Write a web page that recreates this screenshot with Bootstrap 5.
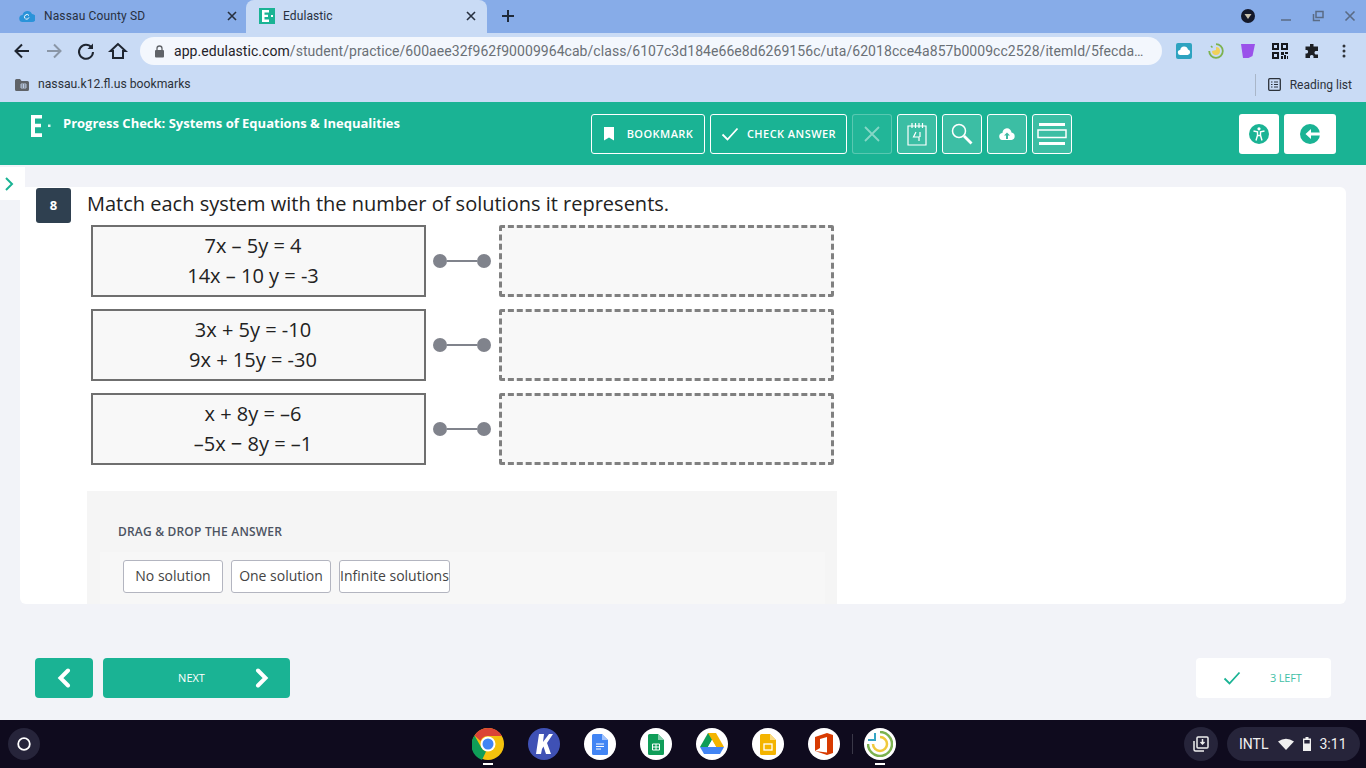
<!doctype html>
<html lang="en"><head><meta charset="utf-8"><title>Edulastic</title>
<link href="https://cdn.jsdelivr.net/npm/bootstrap@5.3.0/dist/css/bootstrap.min.css" rel="stylesheet">
<style>
html,body{height:768px;overflow:hidden}
body{font-family:"Open Sans",sans-serif;background:#f2f3f8;color:#333;width:1366px}
.chrome{font-family:Roboto,sans-serif}
.tabbar{height:33px;background:#87ace8;padding-left:8px;color:#1f2a3a}
.tabx{width:238px;height:33px;padding:0 9px 2px 11px;font-size:12px;font-weight:400;color:#27303f}
.tabx .ttl{flex:1;margin-left:9px;letter-spacing:.13px}
.tabx.on{background:#c9dbf5;width:241px;border-radius:8px 8px 0 0;padding:0 11px 2px 13px;color:#27303f}
.tabx.on .ttl{margin-left:8px;letter-spacing:.1px}
.tabplus{margin-left:14px;margin-bottom:2px}
.winctl{margin-left:auto;gap:18px;padding:0 9px 2px 0}
.winfirst{margin-right:6px}
.toolbar{height:36px;background:#c9dbf5;padding-left:11px}
.navico{width:22px;height:22px;margin-right:10px}
.navico.last{margin-right:11px}
.urlbar{width:1022px;height:28px;background:#f3f7fd;border-radius:14px;font-size:14px;padding-left:14px;color:#6a7076;white-space:nowrap;overflow:hidden}
.urlbar b{font-weight:400;color:#1f2329}
.urltxt{margin-left:9px;letter-spacing:.055px}
.exts{gap:16px;margin-left:14px}
.bmbar{height:33px;background:#c9dbf5;padding:0 14px 2px 15px;font-size:12.2px;color:#2c323a}
.bmlabel{margin-left:9px}
.rlist{margin-left:auto;height:22px;border-left:1px solid #a9b6c8;padding-left:12px;font-size:12px}
.rlabel{margin-left:9px}
.eduhead{height:63px;background:#1ab394;color:#fff;position:relative}
.logoe{width:63px;padding-left:31px;padding-top:10px;height:100%;flex:none}
.etitle{font-size:13px;font-weight:700;padding-top:12px;width:528px;flex:none}
.tools{gap:5px;padding-top:12px}
.hbtn{height:40px;border:1px solid #fff;border-radius:3px;background:transparent;color:#fff;font-size:11px;font-weight:600;letter-spacing:.45px;padding:0;display:flex;align-items:center;justify-content:center}
.hbtn.sq{width:40px;background:rgba(255,255,255,.15)}
.hbtn.off{border-color:rgba(255,255,255,.25);background:rgba(255,255,255,.04)}
.whitebtn{height:40px;background:#fff;border-radius:3px;display:flex;align-items:center;justify-content:center}
.rtools{gap:5px;margin-left:167px;padding-top:12px}
.sidetab{position:absolute;left:0;top:167px;width:25px;height:33px;background:#fff;display:flex;align-items:center;padding-left:4px}
.mainarea{height:555px;padding:22px 20px 0}
.qcard{height:417px;background:#fff;border-radius:6px;overflow:hidden;padding:1px 0 0 16px;width:1326px}
.qnum{width:35px;height:35px;background:#2f4050;color:#fff;border-radius:3px;font-size:13px;font-weight:700;display:flex;align-items:center;justify-content:center;flex:none}
.qtitle{font-size:20px;margin-left:16px;padding-top:1px;line-height:30px;color:#222}
.matchrows{margin-left:55px;margin-top:2px;gap:12px}
.mrow{height:72px}
.lbox{width:335px;height:72px;border:2px solid #6f6f6f;background:#f8f8f8;font-size:20px;line-height:30px;color:#222;text-align:center;padding-right:11px;display:flex;flex-direction:column;justify-content:center}
.connect{width:73px;padding:0 8px 0 7px;flex:none}
.dotc{width:14px;height:14px;background:#80838c;border-radius:50%;flex:none}
.linec{flex:1;height:2px;background:#80838c}
.rbox{width:335px;height:72px;border:3px dashed #808080;background:#f8f8f8;border-radius:2px}
.dragzone{margin:26px 0 0 51px;width:750px;height:113px;background:#f5f5f5;padding:33px 0 0 31px}
.draglabel{font-size:12px;font-weight:600;color:#4c5361;line-height:16px;letter-spacing:.19px}
.chipwrap{margin:12px 0 0 -18px;width:725px;height:60px;background:#f7f7f7;padding:8px 0 0 23px}
.chips{gap:8px}
.chipb{height:33px;background:#fff;border:1px solid #b3b5c0;border-radius:3px;font-size:14px;line-height:29px;color:#444;text-align:center;white-space:nowrap}
.bottomnav{margin-top:54px;padding:0 15px;height:40px;width:1326px}
.tealb{height:40px;background:#1ab394;border-radius:4px;color:#fff;font-size:11px;display:flex;align-items:center;justify-content:center;border:0}
.nextb{width:187px;margin-left:10px;position:relative}
.nextlabel{margin-right:10px}
.nextchev{position:absolute;left:152px;top:10px}
.leftcnt{width:135px;height:40px;background:#fff;border-radius:4px;margin-left:auto;color:#3fbfa6;font-size:11px;padding-left:27px;letter-spacing:-.2px}
.leftlabel{margin-left:29px}
.shelf{position:absolute;left:0;top:720px;width:1366px;height:48px;background:#0f0b1e;font-family:Roboto,sans-serif}
.launch{width:32px;height:32px;border-radius:50%;background:#26243a;left:8px;top:8px;position:absolute;display:flex;align-items:center;justify-content:center}
.apps{position:absolute;left:472px;top:8px;gap:24px}
.appi{width:32px;height:32px;border-radius:50%;background:#fff;position:relative;display:flex;align-items:center;justify-content:center}
.appchrome{background:none}
.appk{background:#3f51b5}
.shelfsep{position:absolute;left:852px;top:14px;width:1px;height:20px;background:#3a3848}
.runmark{position:absolute;left:11px;top:35px;width:10px;height:2px;background:#fff}
.holdbtn{position:absolute;left:1184px;top:7px;width:34px;height:34px;border-radius:50%;background:#26243a;display:flex;align-items:center;justify-content:center}
.tray{position:absolute;left:1227px;top:7px;width:133px;height:34px;border-radius:17px;background:#26243a;color:#f0f0f0;font-size:14px;padding-left:12px;gap:9px}
</style></head><body>

<div class="chrome">
 <div class="tabbar d-flex align-items-center">
  <div class="tabx d-flex align-items-center">
   <svg width="16" height="14" viewBox="0 0 16 14"><path d="M4 13a3.500 3.500 0 0 1-.5-7A5 5 0 0 1 13 5a4 4 0 0 1-.5 8z" fill="#2a93d9"/><path d="M6 9.500a2.500 2.500 0 0 1 4-3M6.500 10c2 .5 3-.5 3.500-1.500" stroke="#fff" fill="none"/></svg>
   <span class="ttl">Nassau County SD</span>
   <svg width="10" height="10" viewBox="0 0 10 10"><path d="M1 1l8 8M9 1l-8 8" stroke="#27303f" stroke-width="1.600"/></svg>
  </div>
  <div class="tabx on d-flex align-items-center">
   <svg width="16" height="16" viewBox="0 0 16 16"><rect width="16" height="16" fill="#1ab394"/><path d="M3 2h7v2.500H5.500v2.200H9v2.300H5.500v2.500H10V14H3z" fill="#fff"/><rect x="12" y="7" width="2" height="2" fill="#fff"/></svg>
   <span class="ttl">Edulastic</span>
   <svg width="10" height="10" viewBox="0 0 10 10"><path d="M1 1l8 8M9 1l-8 8" stroke="#27303f" stroke-width="1.600"/></svg>
  </div>
  <svg class="tabplus" width="14" height="14" viewBox="0 0 14 14"><path d="M7 1v12M1 7h12" stroke="#1f2a3a" stroke-width="2"/></svg>
  <div class="winctl d-flex align-items-center">
   <svg class="winfirst" width="14" height="14" viewBox="0 0 14 14"><circle cx="7" cy="7" r="7" fill="#14192b"/><path d="M3.500 5h7L7 10z" fill="#c9c2ae"/></svg>
   <svg width="14" height="14" viewBox="0 0 14 14"><path d="M2 11h10" stroke="#5a6b85" stroke-width="1.500"/></svg>
   <svg width="14" height="14" viewBox="0 0 14 14"><path d="M5 2.500h7v6H5zM2.500 5v6.500H9" fill="none" stroke="#5a6b85" stroke-width="1.500"/></svg>
   <svg width="14" height="14" viewBox="0 0 14 14"><path d="M2.500 2.500l9 9M11.500 2.500l-9 9" stroke="#5a6b85" stroke-width="1.600"/></svg>
  </div>
 </div>
 <div class="toolbar d-flex align-items-center">
  <svg class="navico" viewBox="0 0 22 22"><path d="M18 11H5M11 4.500L4.500 11l6.500 6.500" fill="none" stroke="#1e2530" stroke-width="2"/></svg>
  <svg class="navico" viewBox="0 0 22 22"><path d="M4 11h13M11 4.500l6.500 6.500-6.500 6.500" fill="none" stroke="#8a96a6" stroke-width="2"/></svg>
  <svg class="navico" viewBox="0 0 22 22"><path d="M16.500 7.500A7 7 0 1 0 18 12" fill="none" stroke="#1e2530" stroke-width="2"/><path d="M18 3.500V9h-5.500z" fill="#1e2530"/></svg>
  <svg class="navico last" viewBox="0 0 22 22"><path d="M11 4L3.500 11H6v7h10v-7h2.500z" fill="none" stroke="#1e2530" stroke-width="2"/></svg>
  <div class="urlbar d-flex align-items-center">
   <svg width="11" height="13" viewBox="0 0 11 13"><rect x="1" y="5" width="9" height="7.500" rx="1" fill="#5f6368"/><path d="M3 5V3.500a2.500 2.500 0 0 1 5 0V5" fill="none" stroke="#5f6368" stroke-width="1.300"/></svg>
   <span class="urltxt"><b>app.edulastic.com</b>/student/practice/600aee32f962f90009964cab/class/6107c3d184e66e8d6269156c/uta/62018cce4a857b0009cc2528/itemId/5fecda…</span>
  </div>
  <div class="exts d-flex align-items-center">
   <svg width="16" height="16" viewBox="0 0 16 16"><rect width="16" height="16" rx="2" fill="#2ea3c0"/><path d="M4.500 12a2.500 2.500 0 0 1-.3-5A4 4 0 0 1 12 6.500a2.800 2.800 0 0 1-.3 5.500z" fill="#fff"/></svg>
   <svg width="16" height="16" viewBox="0 0 16 16"><path d="M8 1.200A6.800 6.800 0 1 1 1.200 8" fill="none" stroke="#7cb24f" stroke-width="1.800"/><path d="M8 4a4 4 0 1 1-4 4l4-1z" fill="#f0d15a"/><path d="M3 3l1.500 1.500" stroke="#7cb24f" stroke-width="1.500"/></svg>
   <svg width="16" height="16" viewBox="0 0 16 16"><path d="M1 1h14l-2.500 12-4 2H3z" fill="#9a52ea"/></svg>
   <svg width="16" height="16" viewBox="0 0 16 16" fill="#15181d"><path d="M0 0h7v7H0zM2 2v3h3V2zM9 0h7v7H9zM11 2v3h3V2zM0 9h7v7H0zM2 11v3h3v-3z" fill-rule="evenodd"/><path d="M9 9h3v3H9zM13 9h3v2h-3zM12 12h2v4h-2zM9 13h2v3H9zM15 13h1v3h-1z"/></svg>
   <svg width="16" height="16" viewBox="0 0 16 16"><path d="M6 1h3.500v2.500H14V8h-2.500a2 2 0 0 0 0 3.500H14V15H9.500v-2a2 2 0 0 0-3.500 0v2H1.500v-4.500h1.600a2 2 0 0 0 0-3.500H1.500V3.500H6z" fill="#1c1f24"/></svg>
   <svg width="16" height="16" viewBox="0 0 16 16" fill="#30343a"><circle cx="8" cy="3" r="1.500"/><circle cx="8" cy="8" r="1.500"/><circle cx="8" cy="13" r="1.500"/></svg>
  </div>
 </div>
 <div class="bmbar d-flex align-items-center">
  <svg width="14" height="12" viewBox="0 0 14 12"><path d="M0 1.500A1.500 1.500 0 0 1 1.500 0h3.500l1.500 2h6A1.500 1.500 0 0 1 14 3.500v7a1.500 1.500 0 0 1-1.500 1.500h-11A1.500 1.500 0 0 1 0 10.500z" fill="#5f6368"/><path d="M6 5h5v4H6zM6 7h5M8.500 5v4" fill="none" stroke="#c9dbf5" stroke-width=".8"/></svg>
  <span class="bmlabel">nassau.k12.fl.us bookmarks</span>
  <div class="rlist d-flex align-items-center">
   <svg width="13" height="13" viewBox="0 0 13 13"><rect x=".7" y=".7" width="11.600" height="11.600" rx="1" fill="none" stroke="#2c323a" stroke-width="1.300"/><path d="M3 4h1.500M6 4h4M3 6.500h1.500M6 6.500h4M3 9h1.500M6 9h4" stroke="#2c323a"/></svg>
   <span class="rlabel">Reading list</span>
  </div>
 </div>
</div>

<div class="eduhead d-flex">
 <div class="logoe">
  <svg width="20" height="22" viewBox="0 0 20 22"><path d="M0 0h11v3.500H4v5.200h6v3.500H4v6H11V22H0z" fill="#fff"/><rect x="17" y="9.500" width="2.500" height="2.500" fill="#fff" opacity=".85"/></svg>
 </div>
 <div class="etitle">Progress Check: Systems of Equations &amp; Inequalities</div>
 <div class="tools d-flex">
  <button class="hbtn" style="width:114px"><svg class="me-2" width="12" height="14" viewBox="0 0 12 14"><path d="M1 0h10v13.500L6 10.500 1 13.500z" fill="#fff"/></svg><span class="ms-1">BOOKMARK</span></button>
  <button class="hbtn" style="width:137px"><svg class="me-2" width="18" height="14" viewBox="0 0 18 14"><path d="M1.500 7.500l5 5L16.500 1.500" fill="none" stroke="#fff" stroke-width="1.800"/></svg><span>CHECK ANSWER</span></button>
  <button class="hbtn sq off"><svg width="16" height="16" viewBox="0 0 16 16"><path d="M1 1l14 14M15 1L1 15" stroke="#fff" stroke-opacity=".45" stroke-width="1.800"/></svg></button>
  <button class="hbtn sq"><svg width="20" height="24" viewBox="0 0 20 24"><path d="M1 4h18v19H1z" fill="none" stroke="#fff" stroke-width="1.200"/><path d="M5 1v5M8.500 1v5M12 1v5M15.500 1v5M9 10l-2.500 5H12v4M13 10v5" fill="none" stroke="#fff" stroke-width="1.200"/></svg></button>
  <button class="hbtn sq"><svg width="22" height="22" viewBox="0 0 22 22"><circle cx="8" cy="8" r="6.500" fill="none" stroke="#fff" stroke-width="1.500"/><path d="M13 13l7.500 7.500" stroke="#fff" stroke-width="2.800"/></svg></button>
  <button class="hbtn sq"><svg width="16" height="12" viewBox="0 0 16 12"><path d="M4 12a3.500 3.500 0 0 1-.5-7A4.500 4.500 0 0 1 12.500 4.500 3.800 3.800 0 0 1 12.500 12z" fill="#fff"/><path d="M8 4.500L5 7.500h2V11h2V7.500h2z" fill="#3ebba3"/></svg></button>
  <button class="hbtn sq"><svg width="30" height="22" viewBox="0 0 30 22"><path d="M2 1.500h26M2 20.500h26" stroke="#fff" stroke-width="2.800"/><rect x="1" y="7" width="28" height="7.500" fill="none" stroke="#fff" stroke-width="1.500"/></svg></button>
 </div>
 <div class="rtools d-flex">
  <div class="whitebtn" style="width:40px"><svg width="20" height="20" viewBox="0 0 20 20"><circle cx="10" cy="10" r="10" fill="#1ab394"/><circle cx="10" cy="4.800" r="1.600" fill="#fff"/><path d="M4.500 7l4 .8v3.500L7 16.500M15.500 7l-4 .8v3.500l1.500 5.200M8.500 11.500h3" fill="none" stroke="#fff" stroke-width="1.400"/></svg></div>
  <div class="whitebtn" style="width:52px"><svg width="20" height="20" viewBox="0 0 20 20"><circle cx="10" cy="10" r="10" fill="#1ab394"/><path d="M20 8.500H11V5L5.500 10l5.500 5v-3.500h9z" fill="#fff"/></svg></div>
 </div>
</div>
<div class="sidetab"><svg width="10" height="14" viewBox="0 0 10 14"><path d="M2 1l6 6-6 6" fill="none" stroke="#1ab394" stroke-width="2"/></svg></div>

<div class="mainarea">
 <div class="qcard">
  <div class="d-flex">
   <div class="qnum">8</div>
   <div class="qtitle">Match each system with the number of solutions it represents.</div>
  </div>
  <div class="matchrows d-flex flex-column">
   <div class="mrow d-flex align-items-center"><div class="lbox"><div>7x – 5y = 4</div><div>14x – 10 y = -3</div></div><div class="connect d-flex align-items-center"><span class="dotc"></span><span class="linec"></span><span class="dotc"></span></div><div class="rbox"></div></div>
   <div class="mrow d-flex align-items-center"><div class="lbox"><div>3x + 5y = -10</div><div>9x + 15y = -30</div></div><div class="connect d-flex align-items-center"><span class="dotc"></span><span class="linec"></span><span class="dotc"></span></div><div class="rbox"></div></div>
   <div class="mrow d-flex align-items-center"><div class="lbox"><div>x + 8y = –6</div><div>–5x − 8y = –1</div></div><div class="connect d-flex align-items-center"><span class="dotc"></span><span class="linec"></span><span class="dotc"></span></div><div class="rbox"></div></div>
  </div>
  <div class="dragzone">
   <div class="draglabel">DRAG &amp; DROP THE ANSWER</div>
   <div class="chipwrap">
    <div class="chips d-flex">
     <div class="chipb" style="width:100px">No solution</div>
     <div class="chipb" style="width:100px">One solution</div>
     <div class="chipb" style="width:111px">Infinite solutions</div>
    </div>
   </div>
  </div>
 </div>
 <div class="bottomnav d-flex">
  <button class="tealb" style="width:58px"><svg width="14" height="20" viewBox="0 0 14 20"><path d="M11 2.500L3.500 10l7.500 7.500" fill="none" stroke="#fff" stroke-width="4" stroke-linecap="round"/></svg></button>
  <button class="tealb nextb"><span class="nextlabel">NEXT</span><svg class="nextchev" width="14" height="20" viewBox="0 0 14 20"><path d="M3 2.500L10.500 10 3 17.500" fill="none" stroke="#fff" stroke-width="4" stroke-linecap="round"/></svg></button>
  <div class="leftcnt d-flex align-items-center"><svg width="18" height="14" viewBox="0 0 18 14"><path d="M1.500 7.500l5 5L16.500 1.500" fill="none" stroke="#1ab394" stroke-width="1.800"/></svg><span class="leftlabel">3 LEFT</span></div>
 </div>
</div>

<div class="shelf">
 <div class="launch"><svg width="14" height="14" viewBox="0 0 14 14"><circle cx="7" cy="7" r="5.800" fill="none" stroke="#fff" stroke-width="1.800"/></svg></div>
 <div class="apps d-flex">
  <div class="appi appchrome"><svg width="32" height="32" viewBox="0 0 32 32"><circle cx="16" cy="16" r="16" fill="#f4c20d"/><path d="M16 0a16 16 0 0 1 13.900 8H16a8 8 0 0 0-7.500 5L2.500 7.500A16 16 0 0 1 16 0z" fill="#db4437"/><path d="M2.500 7.500L9 19a8 8 0 0 0 5 4.500L10 32A16 16 0 0 1 2.500 7.500z" fill="#0f9d58"/><circle cx="16" cy="16" r="7.500" fill="#fff"/><circle cx="16" cy="16" r="5.500" fill="#4285f4"/></svg><span class="runmark"></span></div>
  <div class="appi appk"><svg width="18" height="20" viewBox="0 0 18 20"><path d="M4 0h5L8 8l6-8h4l-6 9 4 11h-5l-2.500-7.500L7 15l-1 5H1z" fill="#fff"/></svg></div>
  <div class="appi"><svg width="16" height="21" viewBox="0 0 16 21"><path d="M1.500 0H10l6 6v13.500a1.500 1.500 0 0 1-1.500 1.500h-13A1.500 1.500 0 0 1 0 19.500v-18A1.500 1.500 0 0 1 1.500 0z" fill="#4285f4"/><path d="M10 0l6 6h-6z" fill="#a1c2fa"/><path d="M4 10h8M4 12.500h8M4 15h5" stroke="#fff"/></svg></div>
  <div class="appi"><svg width="16" height="21" viewBox="0 0 16 21"><path d="M1.500 0H10l6 6v13.500a1.500 1.500 0 0 1-1.500 1.500h-13A1.500 1.500 0 0 1 0 19.500v-18A1.500 1.500 0 0 1 1.500 0z" fill="#0f9d58"/><path d="M10 0l6 6h-6z" fill="#87ceac"/><path d="M4.500 10h7v6h-7zM4.500 13h7M8 10v6" fill="none" stroke="#fff"/></svg></div>
  <div class="appi"><svg width="24" height="22" viewBox="0 0 24 22"><path d="M8 0h8L8 14H0z" fill="#0f9d58"/><path d="M8 0h8l8 14h-8z" fill="#f4b400"/><path d="M0 14h24l-4 7H4z" fill="#4285f4"/><path d="M8 14h8l-4-7z" fill="#fff"/></svg></div>
  <div class="appi"><svg width="16" height="21" viewBox="0 0 16 21"><path d="M1.500 0H10l6 6v13.500a1.500 1.500 0 0 1-1.500 1.500h-13A1.500 1.500 0 0 1 0 19.500v-18A1.500 1.500 0 0 1 1.500 0z" fill="#f4b400"/><path d="M10 0l6 6h-6z" fill="#fadb80"/><rect x="4" y="10" width="8" height="6" fill="none" stroke="#fff" stroke-width="1.300"/></svg></div>
  <div class="appi"><svg width="18" height="22" viewBox="0 0 18 22"><path d="M0 4L12 0l6 2v18l-6 2-12-4 12 1.500V4L5 6v9l-5 3z" fill="#d83b01"/></svg></div>
  <div class="appi"><svg width="26" height="26" viewBox="0 0 26 26"><path d="M13 1a12 12 0 1 1-12 12" fill="none" stroke="#7cb24f" stroke-width="2.500"/><path d="M13 6a7 7 0 1 1-7 7" fill="none" stroke="#f0c93c" stroke-width="2.500"/><path d="M1 9h7V2" fill="none" stroke="#35a5c5" stroke-width="2"/></svg><span class="runmark"></span></div>
 </div>
 <div class="shelfsep"></div>
 <div class="holdbtn"><svg width="16" height="16" viewBox="0 0 16 16"><rect x="4" y="1" width="11" height="11" rx="1" fill="none" stroke="#eee" stroke-width="1.500"/><path d="M1 5v8.500a1.500 1.500 0 0 0 1.500 1.500H11" fill="none" stroke="#eee" stroke-width="1.500"/><path d="M9.500 3v4M7.500 6l2 2 2-2" fill="none" stroke="#eee" stroke-width="1.500"/></svg></div>
 <div class="tray d-flex align-items-center"><span>INTL</span><svg width="16" height="12" viewBox="0 0 16 12"><path d="M0 3.500Q8-2 16 3.500L8 12z" fill="#f0f0f0"/></svg><svg width="8" height="14" viewBox="0 0 8 14"><path d="M2.500 0h3v1.500H8V14H0V1.500h2.500z" fill="#f0f0f0"/><rect x="1.300" y="3" width="5.400" height="3.500" fill="#26243a"/></svg><span>3:11</span></div>
</div>
</body></html>
